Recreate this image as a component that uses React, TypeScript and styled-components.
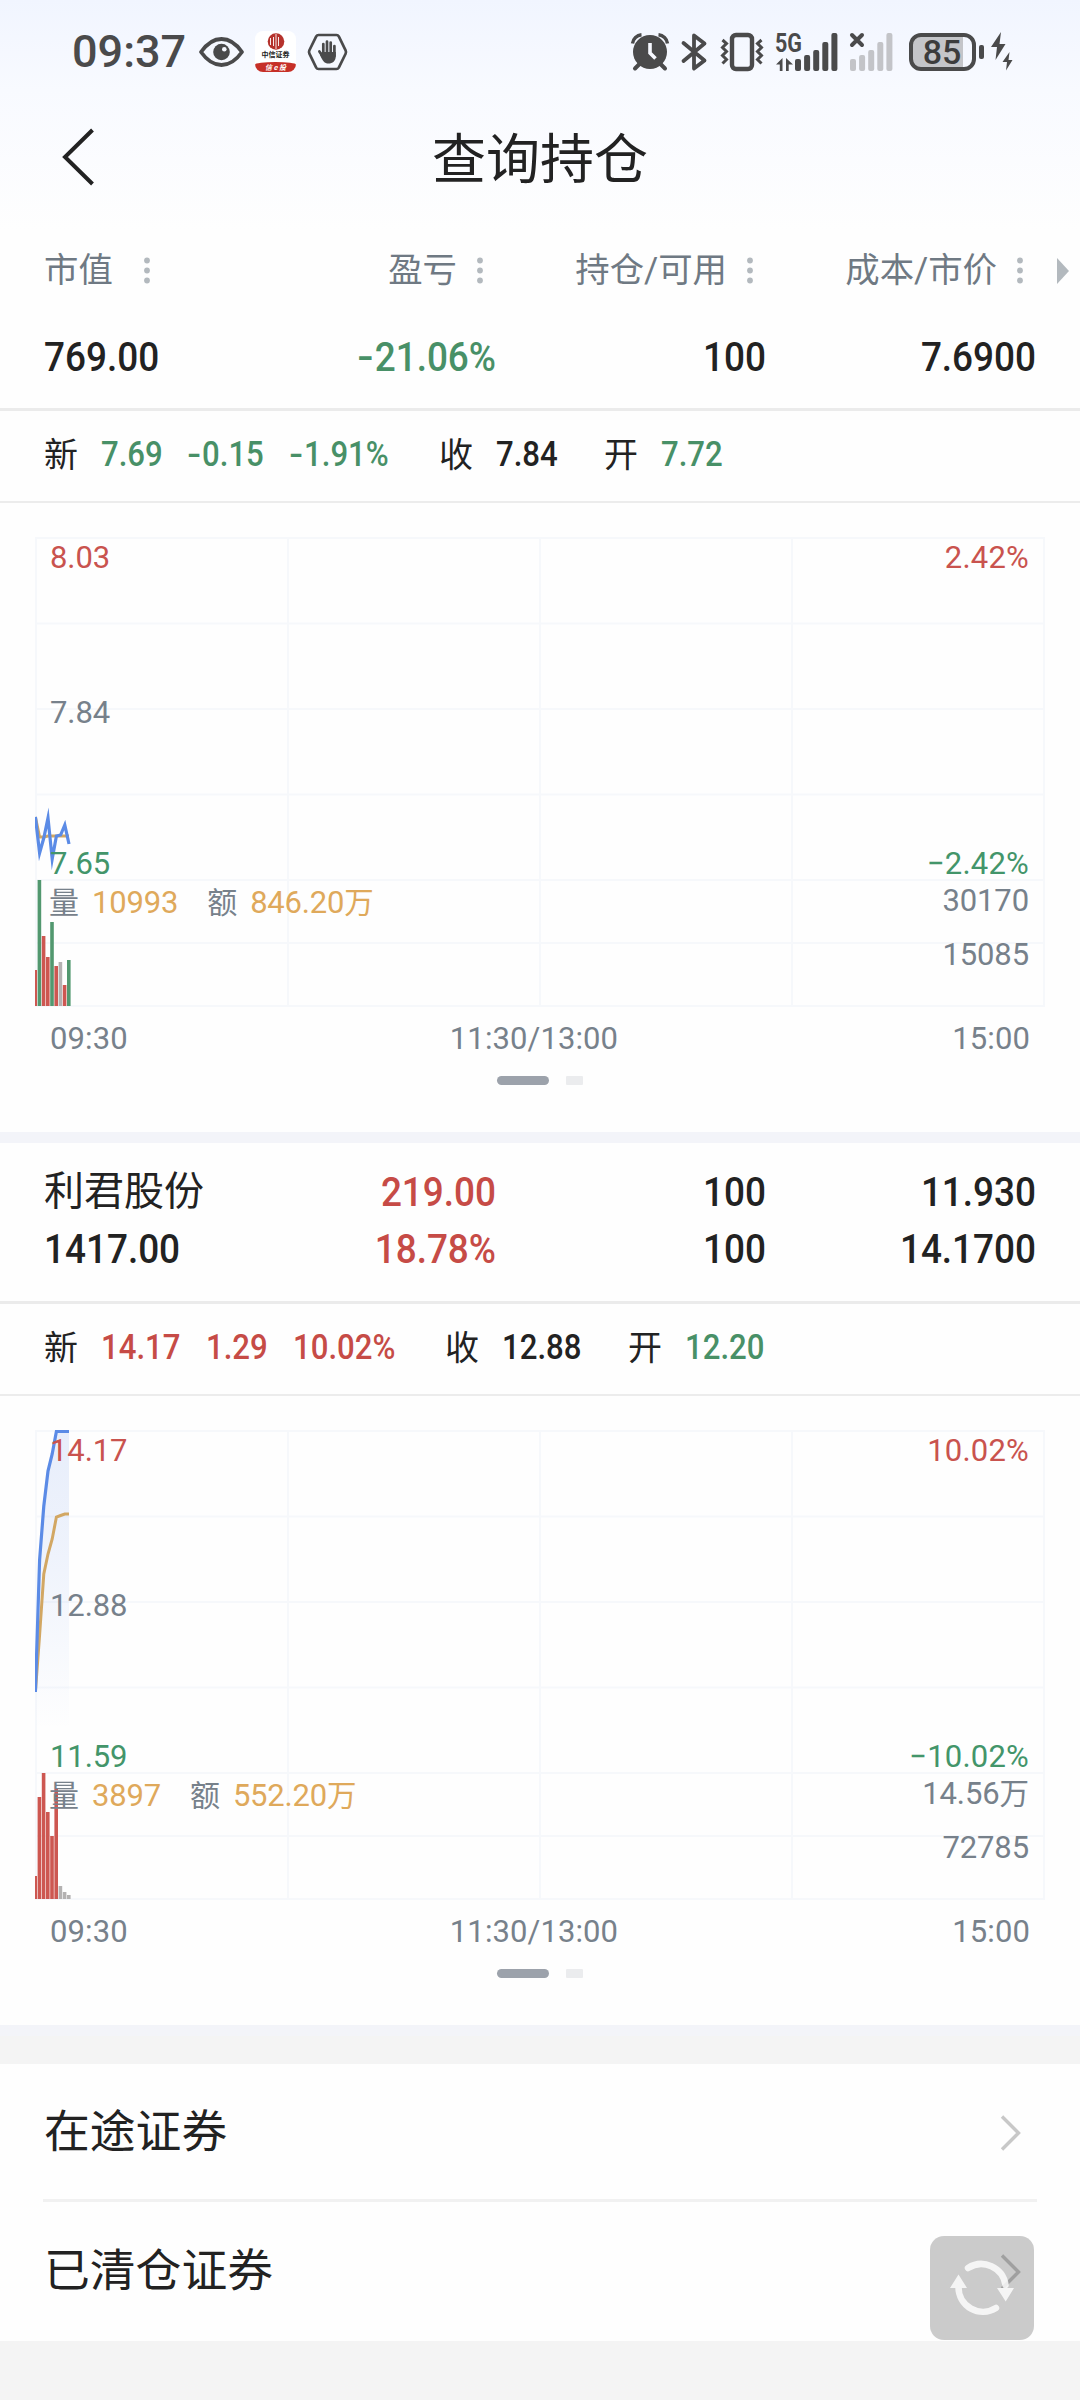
import React from "react";
import styled, { createGlobalStyle } from "styled-components";

const GREEN = "#489067";
const RED = "#c64b46";
const INK = "#222222";
const GREY = "#77818b";
const GOLD = "#dfa95b";
const STATUS = "#4a4a4b";

const Global = createGlobalStyle`
  * { box-sizing: border-box; }
  body {
    margin: 0;
    background: #f4f4f4;
    font-family: Roboto, "Noto Sans CJK SC", sans-serif;
    color: ${INK};
  }
  svg { display: block; flex: none; overflow: visible; }
`;

const Screen = styled.div`
  width: 1080px;
  height: 2400px;
  background: #f4f4f4;
  overflow: hidden;
  display: flex;
  flex-direction: column;
`;

const Top = styled.div`
  height: 313px;
  background: linear-gradient(#f1f5ff 0px, #f8faff 90px, #fefefe 230px);
`;

const StatusBar = styled.div`
  height: 103px;
  padding: 0 65px 0 72px;
  display: flex;
  align-items: center;
  justify-content: space-between;
`;

const StatusGroup = styled.div<{ $gap: number; $push?: number }>`
  display: flex;
  align-items: center;
  gap: ${(p) => p.$gap}px;
  margin-left: ${(p) => p.$push ?? 0}px;
`;

const Clock = styled.span`
  width: 112px;
  margin-right: 4px;
  font-size: 45px;
  line-height: 50px;
  font-weight: 500;
  color: ${STATUS};
  white-space: nowrap;
`;

const BrokerIcon = styled.div`
  width: 41px;
  height: 41px;
  border-radius: 8px;
  background: #fff;
  overflow: hidden;
  display: flex;
  flex-direction: column;
  align-items: center;
  padding-top: 2px;
`;

const BrokerName = styled.span`
  height: 8px;
  font: 700 7px/8px "Noto Sans CJK SC", sans-serif;
  color: #222;
  white-space: nowrap;
`;

const BrokerTag = styled.span`
  margin-top: auto;
  width: 41px;
  height: 10px;
  border-radius: 50% 50% 0 0 / 25% 25% 0 0;
  background: #c62f27;
  color: #fff;
  font: italic 700 7px/10px "Noto Sans CJK SC", sans-serif;
  text-align: center;
`;

const Battery = styled.div`
  width: 67px;
  height: 38px;
  border: 4px solid ${STATUS};
  border-radius: 12px;
  background: linear-gradient(90deg, #c4c5c9 50px, transparent 50px);
  font-size: 34px;
  line-height: 31px;
  font-weight: 500;
  color: #3c3c3d;
  text-align: center;
  padding-right: 1px;
`;

const BatteryNub = styled.div`
  width: 5px;
  height: 14px;
  border-radius: 2px;
  background: ${STATUS};
`;

const NavBar = styled.div`
  height: 108px;
  padding: 0 62px;
  display: grid;
  grid-template-columns: 60px 1fr 60px;
  align-items: center;
`;

const Title = styled.h1`
  margin: 0;
  padding-top: 7px;
  font-size: 54px;
  line-height: 60px;
  font-weight: 400;
  text-align: center;
`;

const COLUMNS = "182px 270px 270px 270px";

const ColumnHeads = styled.div`
  height: 103px;
  padding: 14px 11px 0 44px;
  display: grid;
  grid-template-columns: ${COLUMNS} 1fr;
  align-items: center;
`;

const ColumnHead = styled.div<{ $first?: boolean }>`
  display: flex;
  align-items: center;
  justify-content: ${(p) => (p.$first ? "flex-start" : "flex-end")};
  gap: ${(p) => (p.$first ? 31 : 20)}px;
  padding-right: 13px;
  font-size: 34.4px;
  line-height: 40px;
  color: #6f7983;
  white-space: nowrap;
`;

const MoreMark = styled.svg`
  margin-top: 2px;
`;

const ScrollMark = styled.svg`
  margin: 2px 0 0 auto;
`;

const Card = styled.section`
  background: #fefefe;
  border-bottom: 11px solid #f3f4f9;
`;

const Positions = styled.div<{ $single?: boolean }>`
  height: ${(p) => (p.$single ? 98 : 161)}px;
  padding: ${(p) => (p.$single ? 15 : 20)}px 44px 0;
  border-bottom: 3px solid #ebebeb;
`;

const PositionLine = styled.div`
  height: 57px;
  display: grid;
  grid-template-columns: ${COLUMNS};
  align-items: center;
`;

const Value = styled.span<{ $tone?: string; $left?: boolean }>`
  font-size: 41px;
  line-height: 50px;
  font-weight: 500;
  transform: scaleX(0.9);
  transform-origin: ${(p) => (p.$left ? "left" : "right")} center;
  text-align: ${(p) => (p.$left ? "left" : "right")};
  color: ${(p) => p.$tone ?? INK};
  white-space: nowrap;
`;

const Minus = styled.span`
  display: inline-block;
  transform: scaleX(1.3);
  margin: 0 3px 0 2px;
`;

const StockName = styled.span`
  font-size: 40px;
  line-height: 50px;
  white-space: nowrap;
`;

const QuoteBar = styled.div`
  height: 92px;
  padding: 0 44px 2px;
  display: flex;
  align-items: center;
  border-bottom: 2px solid #ececec;
`;

const QuoteGroup = styled.div`
  display: flex;
  align-items: center;
  gap: 25px;
  margin-right: 46px;
`;

const QuoteLabel = styled.span`
  font-size: 34px;
  line-height: 40px;
  margin-right: -2px;
`;

const QuoteValue = styled.span<{ $tone?: string; $width: number }>`
  width: ${(p) => p.$width}px;
  font-size: 35px;
  line-height: 40px;
  font-weight: 500;
  transform: scaleX(0.89);
  transform-origin: left center;
  color: ${(p) => p.$tone ?? INK};
  white-space: nowrap;
`;

const ChartArea = styled.div`
  position: relative;
  width: 1010px;
  height: 470px;
  margin: 34px 0 0 35px;
`;

const ChartLabel = styled.span<{ $y: number; $side: "left" | "right"; $tone?: string }>`
  position: absolute;
  top: ${(p) => p.$y - 19}px;
  ${(p) => p.$side}: ${(p) => (p.$side === "left" ? 15 : 16)}px;
  font-size: 31px;
  line-height: 40px;
  letter-spacing: ${(p) => (p.$side === "right" && p.$tone ? 0.2 : -0.1)}px;
  color: ${(p) => p.$tone ?? GREY};
  white-space: nowrap;
`;

const VolumeLegend = styled.div`
  position: absolute;
  top: 346px;
  left: 14px;
  display: flex;
  align-items: center;
  font-size: 31px;
  line-height: 40px;
  color: ${GREY};
  white-space: nowrap;
`;

const LegendName = styled.span`
  font-size: 30px;
`;

const LegendValue = styled.span`
  margin: 0 29px 0 13px;
  color: ${GOLD};
  letter-spacing: -0.2px;
`;

const Wan = styled.span`
  font-size: 29.5px;
`;

const TimeAxis = styled.div`
  height: 62px;
  padding: 2px 50px 0;
  display: grid;
  grid-template-columns: 1fr auto 1fr;
  align-items: center;
  font-size: 31px;
  line-height: 40px;
  letter-spacing: 0.1px;
  color: ${GREY};
`;

const TimeTick = styled.span<{ $end?: boolean; $mid?: boolean }>`
  text-align: ${(p) => (p.$end ? "right" : "left")};
  margin-left: ${(p) => (p.$mid ? -12 : 0)}px;
  white-space: nowrap;
`;

const Pager = styled.div`
  height: 63px;
  padding-top: 7px;
  display: flex;
  justify-content: center;
  gap: 17px;
`;

const PagerDot = styled.i<{ $active?: boolean }>`
  width: ${(p) => (p.$active ? 52 : 17)}px;
  height: 9px;
  border-radius: ${(p) => (p.$active ? 5 : 1)}px;
  background: ${(p) => (p.$active ? "#9ca2ab" : "#ebecee")};
`;

const Links = styled.div`
  position: relative;
  margin-top: 28px;
  height: 277px;
  background: #fefefe;
  padding: 0 43px;
`;

const LinkRow = styled.div<{ $line?: boolean }>`
  height: 138px;
  padding: 2px 16px 0 1px;
  display: flex;
  align-items: center;
  justify-content: space-between;
  border-bottom: ${(p) => (p.$line ? "3px solid #f1f1f1" : "0")};
  font-size: 45.8px;
  line-height: 60px;
`;

const Refresh = styled.div`
  position: absolute;
  right: 46px;
  bottom: 1px;
  width: 104px;
  height: 104px;
  border-radius: 14px;
  background: rgba(0, 0, 0, 0.2);
`;

type Tone = "up" | "down" | "flat";
type Bar = [number, Tone];

interface ChartData {
  id: string;
  price: number[];
  average: number[];
  bars: Bar[];
  labels: { y: number; side: "left" | "right"; text: string; tone?: string; wan?: boolean }[];
  volume: string;
  amount: string;
  shade?: boolean;
}

const STEP = 4.2;
const barTone: Record<Tone, string> = { up: "#cd5751", down: "#52986f", flat: "#b4b2b2" };
const toPoints = (ys: number[]) => ys.map((y, i) => `${0.4 + i * STEP},${y}`).join(" ");

const IntradayChart = ({ data }: { data: ChartData }) => (
  <>
    <ChartArea>
      <svg width="1010" height="470" viewBox="0 0 1010 470" fill="none">
        <defs>
          <linearGradient id={`shade-${data.id}`} x1="0" y1="0" x2="0" y2="300" gradientUnits="userSpaceOnUse">
            <stop offset="0" stopColor="#4f7fe5" stopOpacity=".13" />
            <stop offset=".4" stopColor="#4f7fe5" stopOpacity=".09" />
            <stop offset="1" stopColor="#4f7fe5" stopOpacity="0" />
          </linearGradient>
          <clipPath id={`plot-${data.id}`}>
            <rect x="0" y="0" width="1010" height="470" />
          </clipPath>
        </defs>
        <g stroke="#f6f8fb" strokeWidth="2">
          {[1, 86.5, 172, 257.5, 343, 406, 469].map((y) => (
            <path key={y} d={`M0 ${y}H1010`} />
          ))}
          {[1, 253, 505, 757, 1009].map((x) => (
            <path key={x} d={`M${x} 0V470`} />
          ))}
        </g>
        {data.shade && (
          <polygon points={`${toPoints(data.price)} ${0.4 + 8 * STEP},300 0.4,300`} fill={`url(#shade-${data.id})`} />
        )}
        <g clipPath={`url(#plot-${data.id})`}>
          {data.bars.map(([top, tone], i) => (
            <rect key={i} x={0.2 + i * STEP - 1.8} y={top} width="3.6" height={469 - top} fill={barTone[tone]} />
          ))}
          <polyline points={toPoints(data.average)} stroke="#d2a763" strokeWidth="3" />
          <polyline points={toPoints(data.price)} stroke="#5b8be6" strokeWidth="3.2" strokeMiterlimit="12" />
        </g>
      </svg>
      {data.labels.map((l) => (
        <ChartLabel key={l.text} $y={l.y} $side={l.side} $tone={l.tone}>
          {l.text}
          {l.wan && <Wan>万</Wan>}
        </ChartLabel>
      ))}
      <VolumeLegend>
        <LegendName>量</LegendName>
        <LegendValue>{data.volume}</LegendValue>
        <LegendName>额</LegendName>
        <LegendValue>
          {data.amount}
          <Wan>万</Wan>
        </LegendValue>
      </VolumeLegend>
    </ChartArea>
    <TimeAxis>
      <TimeTick>09:30</TimeTick>
      <TimeTick $mid>11:30/13:00</TimeTick>
      <TimeTick $end>15:00</TimeTick>
    </TimeAxis>
    <Pager>
      <PagerDot $active />
      <PagerDot />
    </Pager>
  </>
);

const chartLabels = (
  high: string,
  mid: string,
  low: string,
  pct: string,
  vol: string,
  halfVol: string,
  wan = false
): ChartData["labels"] => [
  { y: 20, side: "left", text: high, tone: "#c9534e" },
  { y: 175, side: "left", text: mid },
  { y: 326, side: "left", text: low, tone: "#43956a" },
  { y: 20, side: "right", text: pct, tone: "#c9534e" },
  { y: 326, side: "right", text: `−${pct}`, tone: "#43956a" },
  { y: 363, side: "right", text: vol, wan },
  { y: 417, side: "right", text: halfVol },
];

const first: ChartData = {
  id: "a",
  price: [280, 316, 301, 281, 322, 299, 298, 288, 307],
  average: [280, 300, 300, 299, 299, 299, 299, 299, 299],
  bars: [[433, "up"], [343, "down"], [399, "up"], [420, "up"], [385, "down"], [429, "up"], [425, "flat"], [448, "up"], [423, "down"]],
  labels: chartLabels("8.03", "7.84", "7.65", "2.42%", "30170", "15085"),
  volume: "10993",
  amount: "846.20",
};

const second: ChartData = {
  id: "b",
  price: [262, 130, 76, 41, 24, 1.5, 1.5, 1.5, 1.5],
  average: [262, 205, 144, 124, 109, 87, 85.5, 84, 84],
  bars: [[446, "up"], [367, "up"], [343, "up"], [382, "up"], [406, "up"], [359, "up"], [456, "flat"], [462, "flat"], [465, "flat"]],
  labels: chartLabels("14.17", "12.88", "11.59", "10.02%", "14.56", "72785", true),
  volume: "3897",
  amount: "552.20",
  shade: true,
};

const Dots = () => (
  <MoreMark width="6" height="27" viewBox="0 0 6 27" fill="#b3b9be">
    <circle cx="3" cy="3.5" r="2.9" />
    <circle cx="3" cy="13.5" r="2.9" />
    <circle cx="3" cy="23.5" r="2.9" />
  </MoreMark>
);

const Chevron = () => (
  <svg width="21" height="36" viewBox="0 0 21 36" fill="none" stroke="#c8c8c8" strokeWidth="3.4">
    <path d="M2 1.5L18.5 18L2 34.5" />
  </svg>
);

const SignalBars = ({ color }: { color: string }) => (
  <g fill={color}>
    {[26, 22, 17, 9, 0].map((y, i) => (
      <rect key={y} x={i * 9.1} y={y} width="6" height={38 - y} rx="2" />
    ))}
  </g>
);

const Status = () => (
  <StatusBar>
    <StatusGroup $gap={11}>
      <Clock>09:37</Clock>
      <svg width="45" height="30" viewBox="0 0 45 30">
        <path d="M2 15C8 6.500 15 2 22.500 2S37 6.500 43 15C37 23.500 30 28 22.500 28S8 23.500 2 15Z" fill="none" stroke={STATUS} strokeWidth="3.8" strokeLinejoin="round" />
        <circle cx="22.500" cy="15" r="8.300" fill={STATUS} />
        <circle cx="25.300" cy="12.200" r="2.300" fill="#f6f8ff" />
      </svg>
      <BrokerIcon>
        <svg width="18" height="17" viewBox="0 0 18 17">
          <circle cx="9" cy="8.500" r="8.300" fill="#b5322c" />
          <path d="M6.500 4V13M11.500 4V13M9 1V16M3.500 5V12" stroke="#fff" strokeWidth="0.900" />
        </svg>
        <BrokerName>中信证券</BrokerName>
        <BrokerTag>信 e 投</BrokerTag>
      </BrokerIcon>
      <svg width="41" height="38" viewBox="0 0 41 38">
        <path d="M11.500 2H29.500Q31 2 31.800 3.400L38.600 17.300Q39.400 19 38.600 20.700L31.800 34.600Q31 36 29.500 36H11.500Q10 36 9.200 34.600L2.400 20.700Q1.600 19 2.400 17.300L9.200 3.400Q10 2 11.500 2Z" fill="none" stroke={STATUS} strokeWidth="2.700" />
        <g stroke={STATUS} strokeWidth="2.700" strokeLinecap="round" fill="none">
          <path d="M16.300 11V21M20 8.500V21M23.700 9.500V21M27.400 13V23M12.400 18.500L16 24" />
        </g>
        <path d="M14.800 19H28.800V23C28.800 28 25.500 30.500 21.500 30.500C17.500 30.500 15.500 28 13 22Z" fill={STATUS} />
      </svg>
    </StatusGroup>
    <StatusGroup $gap={12}>
      <svg width="38" height="38" viewBox="0 0 38 38">
        <path d="M8.500 31L4 35.500M29.500 31L34 35.500" stroke={STATUS} strokeWidth="4" strokeLinecap="round" />
        <circle cx="19" cy="19" r="17" fill={STATUS} />
        <path d="M1.500 10.500A10 10 0 0 1 10.500 1.800M36.500 10.500A10 10 0 0 0 27.500 1.800" fill="none" stroke={STATUS} strokeWidth="3.400" />
        <path d="M19 10V20L24.500 25.500" fill="none" stroke="#f6f8ff" strokeWidth="3.600" />
      </svg>
      <svg width="27" height="38" viewBox="0 0 27 38" fill="none" stroke={STATUS} strokeWidth="3.800" strokeLinejoin="round" strokeLinecap="round">
        <path d="M2.500 10L23.500 27.500L13 35.500V2.500L23.500 10.500L2.500 28" />
      </svg>
      <svg width="44" height="38" viewBox="0 0 44 38" fill="none" stroke={STATUS} strokeWidth="3.600">
        <rect x="12" y="2" width="20" height="34" rx="4" strokeWidth="4.400" />
        <path d="M2.500 7L6.500 10.500L2.500 14.500L6.500 18.500L2.500 22.500L6.500 26.500L2.500 30.500M41.500 7L37.500 10.500L41.500 14.500L37.500 18.500L41.500 22.500L37.500 26.500L41.500 30.500" strokeWidth="3" />
      </svg>
      <svg width="62" height="38" viewBox="0 0 62 38">
        <text x="-1" y="18.500" fontSize="25" fontWeight="700" fontFamily="Roboto, sans-serif" textLength="27" lengthAdjust="spacingAndGlyphs" fill={STATUS}>5G</text>
        <path d="M6.500 25V38H3.800V31.500H0ZM10 38V25L17 31.500H12.700V38Z" fill={STATUS} />
        <g transform="translate(19 0)"><SignalBars color={STATUS} /></g>
      </svg>
      <svg width="44" height="38" viewBox="0 0 44 38">
        <SignalBars color="#c3c4c8" />
        <path d="M2 2L12 12M12 2L2 12" stroke={STATUS} strokeWidth="4" strokeLinecap="round" />
      </svg>
      <StatusGroup $gap={3} $push={3}>
        <Battery>85</Battery>
        <BatteryNub />
        <svg width="28" height="39" viewBox="-3 0 28 39" fill={STATUS}>
          <path d="M11 0L1 15H7L5.500 28L15.500 12H9.500Z M19.500 20L12.500 30H17L16 38.500L22.500 28H18.500Z" />
        </svg>
      </StatusGroup>
    </StatusGroup>
  </StatusBar>
);

export default function App() {
  return (
    <Screen>
      <Global />
      <Top>
        <Status />
        <NavBar>
          <svg width="34" height="58" viewBox="0 0 34 58" fill="none" stroke={INK} strokeWidth="4">
            <path d="M30.500 2L3 29L30.500 56" />
          </svg>
          <Title>查询持仓</Title>
        </NavBar>
        <ColumnHeads>
          <ColumnHead $first>市值<Dots /></ColumnHead>
          <ColumnHead>盈亏<Dots /></ColumnHead>
          <ColumnHead>持仓/可用<Dots /></ColumnHead>
          <ColumnHead>成本/市价<Dots /></ColumnHead>
          <ScrollMark width="12" height="26" viewBox="0 0 12 26" fill="#b3b9be">
            <path d="M0 0L12 13L0 26Z" />
          </ScrollMark>
        </ColumnHeads>
      </Top>
      <Card>
        <Positions $single>
          <PositionLine>
            <Value $left>769.00</Value>
            <Value $tone={GREEN}><Minus>-</Minus>21.06%</Value>
            <Value>100</Value>
            <Value>7.6900</Value>
          </PositionLine>
        </Positions>
        <QuoteBar>
          <QuoteGroup>
            <QuoteLabel>新</QuoteLabel>
            <QuoteValue $width={61} $tone={GREEN}>7.69</QuoteValue>
            <QuoteValue $width={77} $tone={GREEN}><Minus>-</Minus>0.15</QuoteValue>
            <QuoteValue $width={104} $tone={GREEN}><Minus>-</Minus>1.91%</QuoteValue>
          </QuoteGroup>
          <QuoteGroup>
            <QuoteLabel>收</QuoteLabel>
            <QuoteValue $width={62}>7.84</QuoteValue>
          </QuoteGroup>
          <QuoteGroup>
            <QuoteLabel>开</QuoteLabel>
            <QuoteValue $width={62} $tone={GREEN}>7.72</QuoteValue>
          </QuoteGroup>
        </QuoteBar>
        <IntradayChart data={first} />
      </Card>
      <Card>
        <Positions>
          <PositionLine>
            <StockName>利君股份</StockName>
            <Value $tone={RED}>219.00</Value>
            <Value>100</Value>
            <Value>11.930</Value>
          </PositionLine>
          <PositionLine>
            <Value $left>1417.00</Value>
            <Value $tone={RED}>18.78%</Value>
            <Value>100</Value>
            <Value>14.1700</Value>
          </PositionLine>
        </Positions>
        <QuoteBar>
          <QuoteGroup>
            <QuoteLabel>新</QuoteLabel>
            <QuoteValue $width={80} $tone={RED}>14.17</QuoteValue>
            <QuoteValue $width={62} $tone={RED}>1.29</QuoteValue>
            <QuoteValue $width={106} $tone={RED}>10.02%</QuoteValue>
          </QuoteGroup>
          <QuoteGroup>
            <QuoteLabel>收</QuoteLabel>
            <QuoteValue $width={80}>12.88</QuoteValue>
          </QuoteGroup>
          <QuoteGroup>
            <QuoteLabel>开</QuoteLabel>
            <QuoteValue $width={80} $tone={GREEN}>12.20</QuoteValue>
          </QuoteGroup>
        </QuoteBar>
        <IntradayChart data={second} />
      </Card>
      <Links>
        <LinkRow $line>在途证券<Chevron /></LinkRow>
        <LinkRow>已清仓证券<Chevron /></LinkRow>
        <Refresh>
          <svg width="104" height="104" viewBox="0 0 104 104" fill="none" stroke="#fff" strokeOpacity=".8" strokeWidth="6.500" strokeLinecap="round">
            <path d="M38 32A24.500 24.500 0 0 1 75.500 49M66 72A24.500 24.500 0 0 1 28.500 51" />
            <path d="M67 52H84L75.700 65.500ZM20 52H37L28.500 38.500Z" fill="#f5f5f5" stroke="none" />
          </svg>
        </Refresh>
      </Links>
    </Screen>
  );
}
